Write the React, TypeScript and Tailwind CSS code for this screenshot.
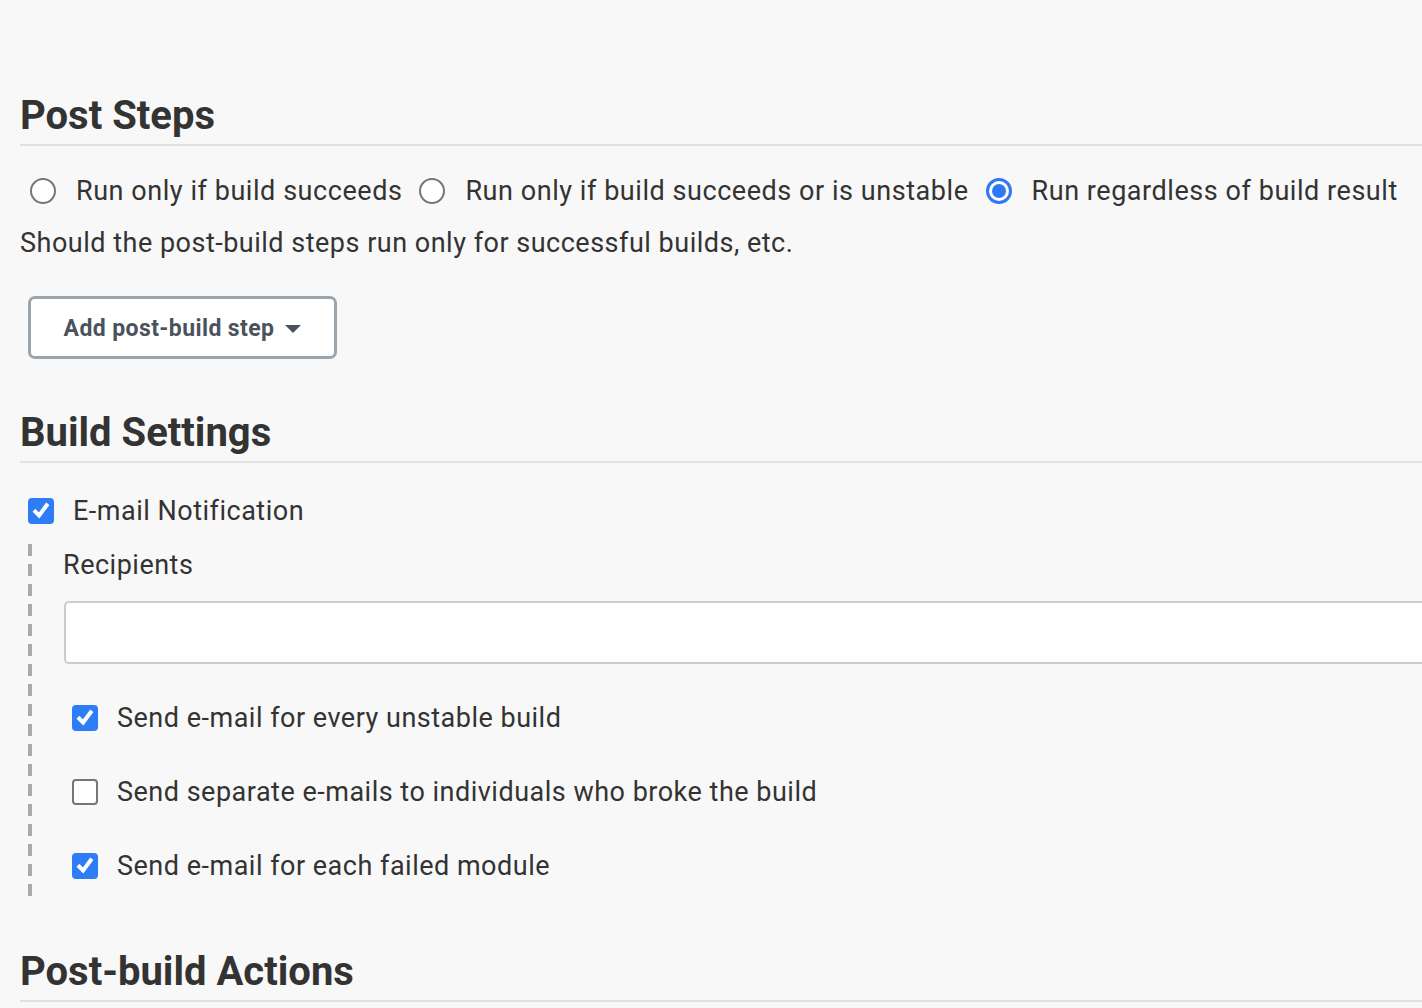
import { useState } from 'react'

function Radio({ checked }: { checked: boolean }) {
  if (checked) {
    return (
      <span className="w-[26px] h-[26px] rounded-full border-[3px] border-[#2f78f4] bg-white flex items-center justify-center shrink-0">
        <span className="w-[14px] h-[14px] rounded-full bg-[#2f78f4]" />
      </span>
    )
  }
  return <span className="w-[26px] h-[26px] rounded-full border-2 border-[#767676] bg-white shrink-0" />
}

function Checkbox({ checked }: { checked: boolean }) {
  if (checked) {
    return (
      <span className="w-[26px] h-[26px] rounded-[4px] bg-[#2f7df6] flex items-center justify-center shrink-0">
        <svg viewBox="0 0 16 16" className="w-[20px] h-[20px]" fill="none" stroke="white" strokeWidth={3.2} strokeLinecap="square">
          <path d="M3.5 8.5l3 3 6-8" />
        </svg>
      </span>
    )
  }
  return <span className="w-[26px] h-[26px] rounded-[4px] border-2 border-[#767676] bg-white shrink-0" />
}

function SectionTitle({ children }: { children: string }) {
  return (
    <h2 className="text-[40px] font-bold leading-[46px] pt-px pb-[5px] border-b-2 border-[#e2e2e2] text-[#333]">
      {children}
    </h2>
  )
}

export default function App() {
  const [when] = useState('always')
  const options = [
    { id: 'success', label: 'Run only if build succeeds' },
    { id: 'unstable', label: 'Run only if build succeeds or is unstable' },
    { id: 'always', label: 'Run regardless of build result' },
  ]
  const mailOptions = [
    { label: 'Send e-mail for every unstable build', checked: true },
    { label: 'Send separate e-mails to individuals who broke the build', checked: false },
    { label: 'Send e-mail for each failed module', checked: true },
  ]

  return (
    <div className="min-h-screen bg-[#f8f8f8] overflow-hidden font-['Roboto',sans-serif] text-[#333]">
      <div className="w-[1500px] pl-5 pt-[92px]">
        <SectionTitle>Post Steps</SectionTitle>

        <div className="mt-[30px] h-[30px] flex items-center text-[27px] tracking-[0.55px] pl-[10px]">
          {options.map((o) => (
            <label key={o.id} className="flex items-center mr-[17px]">
              <Radio checked={when === o.id} />
              <span className="ml-[20px] whitespace-nowrap">{o.label}</span>
            </label>
          ))}
        </div>

        <p className="mt-[22px] text-[27px] tracking-[0.5px] leading-[30px]">
          Should the post-build steps run only for successful builds, etc.
        </p>

        <button className="mt-[38px] ml-2 h-[63px] w-[309px] pt-[3px] border-[3px] border-[#9ba5ae] rounded-[7px] bg-white flex items-center justify-center gap-[11px] text-[23px] tracking-[0.4px] font-bold text-[#4a535d]">
          Add post-build step
          <svg viewBox="0 0 16 8" className="w-[16px] h-[8px]" fill="#4a535d">
            <path d="M0 0h16L8 8z" />
          </svg>
        </button>

        <div className="mt-[50px]">
          <SectionTitle>Build Settings</SectionTitle>
        </div>

        <label className="mt-[33px] ml-2 h-[30px] flex items-center text-[27px] tracking-[0.5px]">
          <Checkbox checked />
          <span className="ml-[19px]">E-mail Notification</span>
        </label>

        <div className="mt-[18px] ml-2 flex">
          <div className="w-[4px] bg-[repeating-linear-gradient(to_bottom,#aaa_0,#aaa_12px,transparent_12px,transparent_20px)]" />
          <div className="flex-1 pl-[31px] pt-[6px] pb-[16px] text-[27px] tracking-[0.5px]">
            <div className="leading-[30px]">Recipients</div>
            <input className="mt-[21px] ml-px block w-[1400px] h-[63px] bg-white border-2 border-[#cccccc] rounded-[5px] outline-none" />
            <div className="mt-[39px] flex flex-col gap-[44px] pl-[9px]">
              {mailOptions.map((m) => (
                <label key={m.label} className="h-[30px] flex items-center">
                  <Checkbox checked={m.checked} />
                  <span className="ml-[19px]">{m.label}</span>
                </label>
              ))}
            </div>
          </div>
        </div>

        <div className="mt-[51px]">
          <SectionTitle>Post-build Actions</SectionTitle>
        </div>
      </div>
    </div>
  )
}
